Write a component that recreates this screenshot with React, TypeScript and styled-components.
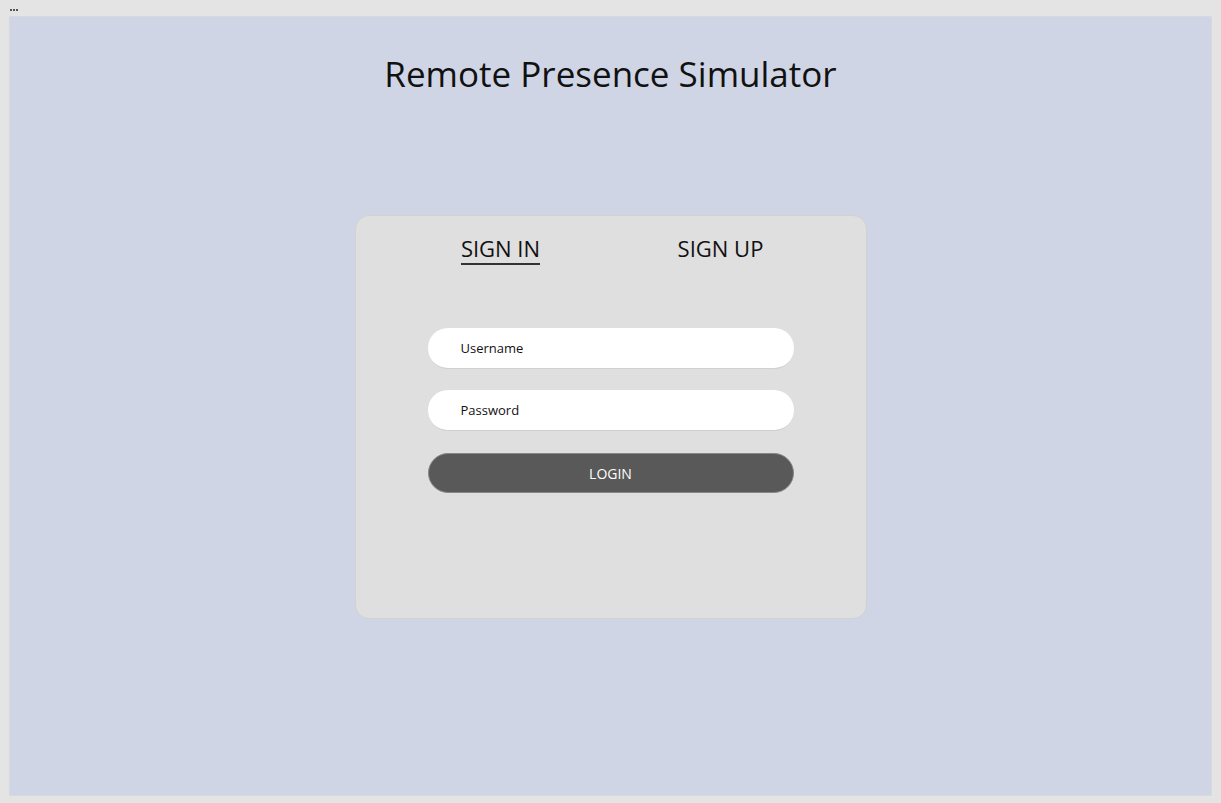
import React from "react";
import styled, { createGlobalStyle } from "styled-components";

const Global = createGlobalStyle`
  html, body { margin: 0; padding: 0; background: #e4e4e4; }
  body { font-family: "Open Sans", "Noto Sans", sans-serif; color: #111; }
  * { box-sizing: border-box; }
`;

const Page = styled.div`
  width: 1221px;
  height: 803px;
  padding: 16px 9px 7px 9px;
  position: relative;
`;

const Dots = styled.div`
  position: absolute;
  left: 10px;
  top: 9px;
  display: flex;
  gap: 1px;
`;

const Dot = styled.span`
  width: 2px;
  height: 2px;
  background: #555;
`;

const Panel = styled.main`
  height: 100%;
  background: #cfd5e5;
  border: 1px solid #d7d9df;
  display: flex;
  flex-direction: column;
  align-items: center;
`;

const Title = styled.h1`
  margin: 32px 0 0;
  font-size: 35px;
  font-weight: 400;
  line-height: 50px;
  color: #111;
`;

const Card = styled.section`
  margin-top: 116px;
  width: 512px;
  height: 404px;
  background: #dfdfdf;
  border: 1px solid #d2d2d2;
  border-radius: 14px;
  display: flex;
  flex-direction: column;
  align-items: center;
  padding-top: 18px;
`;

const Tabs = styled.div`
  width: 440px;
  display: grid;
  grid-template-columns: 1fr 1fr;
`;

const Tab = styled.button<{ $active?: boolean }>`
  justify-self: center;
  background: none;
  border: none;
  padding: 0;
  font-family: inherit;
  font-size: 22px;
  line-height: 29px;
  color: #111;
  border-bottom: 2px solid ${(p) => (p.$active ? "#333" : "transparent")};
  cursor: pointer;
`;

const Form = styled.form`
  margin-top: 63px;
  width: 366px;
  display: flex;
  flex-direction: column;
  gap: 21px;
`;

const Input = styled.input`
  height: 41px;
  border: none;
  border-bottom: 1px solid #d0d0d0;
  border-radius: 20px;
  background: #fff;
  padding: 0 33px;
  font-family: inherit;
  font-size: 13px;
  color: #111;
  outline: none;
  &::placeholder { color: #111; }
`;

const Button = styled.button`
  margin-top: 1px;
  height: 40px;
  border: 1px solid #888;
  border-radius: 20px;
  background: #595959;
  color: #fff;
  font-family: inherit;
  font-size: 14px;
  cursor: pointer;
`;

export default function App() {
  return (
    <>
      <Global />
      <Page>
        <Dots>
          <Dot />
          <Dot />
          <Dot />
        </Dots>
        <Panel>
          <Title>Remote Presence Simulator</Title>
          <Card>
            <Tabs>
              <Tab $active>SIGN IN</Tab>
              <Tab>SIGN UP</Tab>
            </Tabs>
            <Form onSubmit={(e) => e.preventDefault()}>
              <Input placeholder="Username" />
              <Input type="password" placeholder="Password" />
              <Button type="submit">LOGIN</Button>
            </Form>
          </Card>
        </Panel>
      </Page>
    </>
  );
}
